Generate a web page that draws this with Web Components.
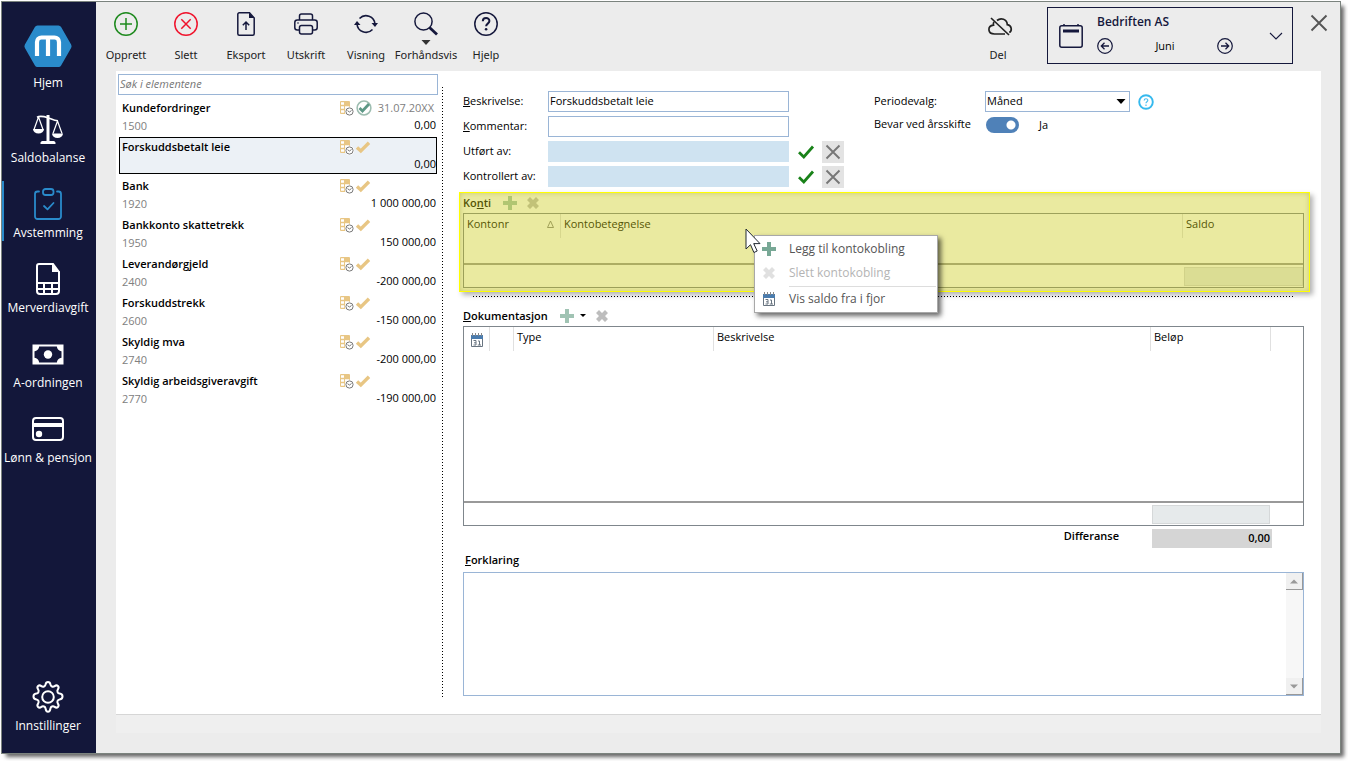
<!DOCTYPE html>
<html lang="nb">
<head>
<meta charset="utf-8">
<title>Avstemming – Forskuddsbetalt leie</title>
<style>
  body { margin: 0; background: #fff; color: #000; font: 11px/18px "Open Sans", "Noto Sans", sans-serif; }
</style>
</head>
<body>
<app-window>
  <nav-rail slot="nav">
    <nav-item icon="home">Hjem</nav-item>
    <nav-item icon="scales">Saldobalanse</nav-item>
    <nav-item icon="clipboard" current>Avstemming</nav-item>
    <nav-item icon="sheet">Merverdiavgift</nav-item>
    <nav-item icon="cash">A-ordningen</nav-item>
    <nav-item icon="card">Lønn &amp; pensjon</nav-item>
    <nav-item icon="gear" slot="end">Innstillinger</nav-item>
  </nav-rail>

  <tool-bar slot="header">
    <tool-button icon="add">Opprett</tool-button>
    <tool-button icon="remove">Slett</tool-button>
    <tool-button icon="export">Eksport</tool-button>
    <tool-button icon="print">Utskrift</tool-button>
    <tool-button icon="refresh">Visning</tool-button>
    <tool-button icon="search" menu>Forhåndsvis</tool-button>
    <tool-button icon="help">Hjelp</tool-button>
    <tool-button icon="cloud" slot="end">Del</tool-button>
    <period-picker slot="end" company="Bedriften AS" period="Juni"></period-picker>
  </tool-bar>

  <account-list>
    <account-item number="1500" amount="0,00" date="31.07.20XX" done>Kundefordringer</account-item>
    <account-item amount="0,00" selected>Forskuddsbetalt leie</account-item>
    <account-item number="1920" amount="1 000 000,00">Bank</account-item>
    <account-item number="1950" amount="150 000,00">Bankkonto skattetrekk</account-item>
    <account-item number="2400" amount="-200 000,00">Leverandørgjeld</account-item>
    <account-item number="2600" amount="-150 000,00">Forskuddstrekk</account-item>
    <account-item number="2740" amount="-200 000,00">Skyldig mva</account-item>
    <account-item number="2770" amount="-190 000,00">Skyldig arbeidsgiveravgift</account-item>
  </account-list>

  <detail-pane>
    <text-field slot="form" value="Forskuddsbetalt leie"><u>B</u>eskrivelse:</text-field>
    <text-field slot="form"><u>K</u>ommentar:</text-field>
    <text-field slot="form" signoff>Utført av:</text-field>
    <text-field slot="form" signoff>Kontrollert av:</text-field>
    <period-options slot="options"></period-options>

    <highlight-box>
      <section-title><span slot="text">Ko<u>n</u>ti</span></section-title>
      <data-grid kind="accounts"></data-grid>
      <context-menu slot="over"></context-menu>
    </highlight-box>
    <dotted-rule></dotted-rule>
    <section-title menu><span slot="text"><u>D</u>okumentasjon</span></section-title>
    <data-grid kind="documents"></data-grid>
    <difference-row value="0,00">Differanse</difference-row>
    <note-field><u>F</u>orklaring</note-field>
  </detail-pane>
</app-window>

<script>
const ICONS = {
  home: [48, 45, '<path d="M13.500 0.500h21a3 3 0 0 1 2.600 1.500l10 17.500a3.500 3.500 0 0 1 0 3.500l-10 17.500a3 3 0 0 1-2.600 1.500h-21a3 3 0 0 1-2.600-1.500l-10-17.500a3.500 3.500 0 0 1 0-3.500l10-17.500a3 3 0 0 1 2.600-1.500z" fill="#2a8bcb"/><path d="M13 31V17a4.500 4.500 0 0 1 4.500-4.500h13A4.500 4.500 0 0 1 35 17v14M24 12.500V31" fill="none" stroke="#fff" stroke-width="4.200"/>'],
  scales: [32, 32, '<g fill="none" stroke="#fff"><path d="M16 2v26" stroke-width="3"/><path d="M5 4.200c3-1.600 8-.4 11 .6s6 3 10 3" stroke-width="1.600"/><path d="M6.500 4L2 16.500M6.500 4L11 16.500M25.500 8L21 20.500M25.500 8L30 20.500" stroke-width="1.200"/></g><path d="M1 16h11a5.500 4.500 0 0 1-11 0zM20 20.500h11a5.500 4.500 0 0 1-11 0zM8.500 29.500a2 2 0 0 1 2-1.500h11a2 2 0 0 1 2 1.500v1.500h-15z" fill="#fff"/>'],
  clipboard: [32, 32, '<g fill="none" stroke="#2a8bcb" stroke-width="1.800" stroke-linecap="round" stroke-linejoin="round"><path d="M7 3.500H5.500A2.500 2.500 0 0 0 3 6v22.500A2.500 2.500 0 0 0 5.500 31h21a2.500 2.500 0 0 0 2.500-2.500V6a2.500 2.500 0 0 0-2.500-2.500H25"/><rect x="11" y="1" width="10.500" height="6" rx="2.500"/><path d="M12 18l3.500 3.300L21.500 15"/></g>'],
  sheet: [32, 32, '<path d="M7 1h14l6 8v19a3 3 0 0 1-3 3H8a3 3 0 0 1-3-3V3a2 2 0 0 1 2-2z" fill="none" stroke="#fff" stroke-width="2"/><path d="M20 1v8h8zM5 19h22v2H5zM5 25h22v2H5zM11 19h2v12h-2zM19 19h2v12h-2z" fill="#fff"/>'],
  cash: [32, 32, '<path d="M1.500 7.500h29v18h-29z" fill="none" stroke="#fff" stroke-width="2"/><circle cx="16" cy="16.500" r="4.200" fill="#fff"/><path d="M1 7h6a5 5 0 0 1-6 6zM31 7h-6a5 5 0 0 0 6 6zM1 26h6a5 5 0 0 0-6-6zM31 26h-6a5 5 0 0 1 6-6z" fill="#fff"/>'],
  card: [32, 32, '<rect x="1" y="5" width="30" height="22" rx="3" fill="none" stroke="#fff" stroke-width="2"/><path d="M1 10h30v4H1z" fill="#fff"/><circle cx="7" cy="21" r="3.200" fill="#fff"/>'],
  gear: [32, 32, '<g fill="none" stroke="#fff" stroke-width="2" stroke-linejoin="round"><path d="M13.600 3.400c.5-3.200 4.300-3.200 4.800 0 .3 2 2.500 2.900 4.200 1.700 2.600-1.900 5.200.7 3.300 3.300-1.200 1.700-.3 3.900 1.700 4.200 3.900.5 3.900 5.300 0 5.800-2 .3-2.900 2.500-1.700 4.200 1.900 2.600-.7 5.200-3.300 3.300-1.700-1.200-3.900-.3-4.200 1.700-.5 4.200-4.300 4.200-4.800 0-.3-2-2.500-2.900-4.200-1.700-2.600 1.900-5.200-.7-3.300-3.300 1.200-1.700.3-3.900-1.700-4.200-3.900-.5-3.900-5.300 0-5.800 2-.3 2.900-2.500 1.700-4.200-1.900-2.600.7-5.200 3.300-3.300 1.700 1.200 3.900.3 4.200-1.700z"/><circle cx="16" cy="16" r="5.800"/></g>'],
  add: [24, 24, '<g fill="none" stroke="#1e8a1e" stroke-width="1.500"><circle cx="12" cy="12" r="11.200"/><path d="M12 6v12M6 12h12"/></g>'],
  remove: [24, 24, '<g fill="none" stroke="#f0142d" stroke-width="1.500"><circle cx="12" cy="12" r="11.200"/><path d="M7.300 7.300l9.400 9.400M16.700 7.300l-9.400 9.400"/></g>'],
  export: [24, 24, '<g fill="none" stroke="#15183c" stroke-width="1.500"><path d="M5.500.8h10L20.200 6v15.700a1.500 1.500 0 0 1-1.500 1.500H5.300a1.500 1.500 0 0 1-1.500-1.500V2.300A1.500 1.500 0 0 1 5.300.8z"/><path d="M12 18v-7.500M8.800 13.300L12 10l3.200 3.300"/></g><path d="M15 .8V6h5.500z" fill="#15183c"/>'],
  print: [24, 24, '<g fill="none" stroke="#15183c" stroke-width="1.500"><path d="M5.500 8V4a2 2 0 0 1 2-2h9a2 2 0 0 1 2 2v4"/><path d="M5.500 18H3.300a2.500 2.500 0 0 1-2.500-2.500v-5A2.500 2.500 0 0 1 3.300 8h17.400a2.500 2.500 0 0 1 2.500 2.500v5a2.500 2.500 0 0 1-2.500 2.500h-2.200"/><path d="M5.500 15.500a2 2 0 0 1 2-2h9a2 2 0 0 1 2 2V20a2 2 0 0 1-2 2h-9a2 2 0 0 1-2-2z"/></g><circle cx="4" cy="11" r=".8" fill="#15183c"/>'],
  refresh: [24, 24, '<g fill="none" stroke="#15183c" stroke-width="1.600"><path d="M5.500 6.500A9 9 0 0 1 21 12M18.500 17.500A9 9 0 0 1 3 12"/></g><path d="M17.500 11h6.500L21 15zM0 13h6.500L3 9z" fill="#15183c"/>'],
  search: [24, 24, '<circle cx="9.500" cy="9.500" r="8.600" fill="none" stroke="#15183c" stroke-width="1.500"/><path d="M15.500 15.500l7.500 7" stroke="#15183c" stroke-width="2.800"/>'],
  help: [24, 24, '<g fill="none" stroke="#15183c"><circle cx="12" cy="12" r="11.200" stroke-width="1.500"/><path d="M8.800 9.300c0-4.200 6.600-4.200 6.600-.3 0 2.600-3.300 2.600-3.300 5.200" stroke-width="2"/></g><circle cx="12.100" cy="17.200" r="1.300" fill="#15183c"/>'],
  cloud: [24, 24, '<g fill="none" stroke="#222" stroke-width="1.700"><path d="M11 8.500c4-3.500 10-1.200 10.300 4.200 4.800.8 4.900 6.200 2 7.800M19 22H8.500C1.500 22 1 14 7.500 13.200c-.3-1.500-.1-2.500.4-3.300"/><path d="M5 6l18 17"/></g>'],
  calendar: [24, 24, '<g fill="none" stroke="#15183c"><rect x=".8" y="1.800" width="22.400" height="21.400" rx="2" stroke-width="1.500"/><path d="M4 7h16" stroke-width="3"/><path d="M5 0v2M19 0v2" stroke-width="1.500"/></g>'],
  left: [16, 16, '<g fill="none" stroke="#15183c" stroke-width="1.200"><circle cx="8" cy="8" r="7.300"/><path d="M12 8H4.500M7.500 4.800L4.300 8l3.200 3.200" stroke-width="1.300"/></g>'],
  right: [16, 16, '<g fill="none" stroke="#15183c" stroke-width="1.200"><circle cx="8" cy="8" r="7.300"/><path d="M4 8h7.500M8.500 4.800L11.700 8l-3.200 3.200" stroke-width="1.300"/></g>'],
  chevron: [14, 8, '<path d="M1 1l6 6 6-6" fill="none" stroke="#15183c" stroke-width="1.100"/>'],
  close: [16, 16, '<path d="M.5.500l15 15M15.500.500l-15 15" stroke="#555" stroke-width="1.900"/>'],
  cross: [16, 16, '<path d="M1.500 1.500l13 13M14.500 1.500l-13 13" stroke="#777" stroke-width="1.900"/>'],
  caret: [10, 5, '<path d="M.5 0h9L5 5z" fill="currentColor"/>'],
  tick: [16, 14, '<path d="M1 7.300L5.800 12 15 1.500" fill="none" stroke="#198219" stroke-width="2.800"/>'],
  gold: [14, 12, '<path d="M1 6.500L4.800 10 13 1.800" fill="none" stroke="#e8c684" stroke-width="3.400"/>'],
  approved: [16, 16, '<circle cx="8" cy="8" r="6.900" fill="none" stroke="#9dbdb0" stroke-width="1.500"/><path d="M3.500 8l3 3L13 4" fill="none" stroke="#5d9886" stroke-width="2.800"/>'],
  ledger: [14, 15, '<path d="M1 0h8a1 1 0 0 1 1 1v12H1a1 1 0 0 1-1-1V1a1 1 0 0 1 1-1z" fill="#e8c684"/><path d="M1 1.200h3v2.600H1zM1 5.200h3v2.600H1zM1 9.200h3v2.600H1zM5 5.200h4v2.600H5z" fill="#fff"/><circle cx="9.500" cy="10.500" r="4.800" fill="#fff"/><circle cx="9.500" cy="10.500" r="3.600" fill="#fff" stroke="#777"/><path d="M7.500 9.700l2 1.300L11.500 9.500" fill="none" stroke="#777"/>'],
  plus: [14, 14, '<path d="M5 0h4v5h5v4H9v5H5V9H0V5h5z" fill="currentColor"/>'],
  erase: [12, 12, '<path d="M3 0L6 3 9 0 12 3 9 6 12 9 9 12 6 9 3 12 0 9 3 6 0 3z" fill="currentColor"/>'],
  sort: [7, 8, '<path d="M3.500 1L6.500 7.500H.5z" fill="none" stroke="#777" stroke-width=".9"/>'],
  date: [12, 14, '<path d="M0 2h12v4H0z" fill="#4a7cae"/><path d="M1.500 0v3M4.500 0v3M7.500 0v3M10.500 0v3" stroke="#888"/><path d="M.5 6v7.500h11V6M2.500 7.500h2.500v4.500H2.500M3 9.800h2M7 8h1.500v4M6.800 12H10" fill="none" stroke="#687480"/>'],
  info: [16, 16, '<circle cx="8" cy="8" r="6.800" fill="none" stroke="#35b9ee" stroke-width="1.900"/><path d="M6.200 6.500c0-2.300 3.600-2.300 3.600-.2 0 1.400-1.800 1.500-1.800 3M8 10.600v1.400" fill="none" stroke="#4abff0" stroke-width="1.200"/>'],
  pointer: [16, 26, '<path d="M1 1v20l4.500-4.300 3.400 7.800 3.300-1.500-3.500-7.400H15z" fill="#fff" stroke="#222a33"/>'],
  up: [8, 5, '<path d="M0 4.500L4 .500l4 4z" fill="#999"/>'],
  down: [8, 5, '<path d="M0 .500l4 4 4-4z" fill="#999"/>']
};

/* Registers an element whose open shadow root is filled from a template. */
function element(tag, markup, setup) {
  const template = document.createElement('template');
  template.innerHTML = markup;
  customElements.define(tag, class extends HTMLElement {
    connectedCallback() {
      if (this.shadowRoot) return;
      const root = this.attachShadow({ mode: 'open' });
      root.append(template.content.cloneNode(true));
      if (setup) setup(this, root);
    }
  });
}

function icon(name) {
  const el = document.createElement('ui-icon');
  el.setAttribute('name', name);
  return el;
}

element('ui-icon', `<style>:host{display:block;flex:none}svg{display:block;overflow:visible}</style>`, (host, root) => {
  const [w, h, body] = ICONS[host.getAttribute('name')];
  root.innerHTML += `<svg width="${w}" height="${h}" viewBox="0 0 ${w} ${h}" aria-hidden="true">${body}</svg>`;
});

element('app-window', `<style>
  :host{display:grid;grid-template-columns:94px 1fr;min-height:calc(100vh - 10px);margin:2px 8px 8px 2px;background:#ececec;
    box-shadow:0 0 0 1px #7b837e,4px 4px 4px rgba(0,0,0,.6)}
  .main{display:flex;flex-direction:column;min-width:0}
  main{display:grid;grid-template-columns:327px 1fr;flex:1;margin:0 19px 0 20px;background:#fff}
  footer{height:18px;margin:0 19px 20px 20px;border-top:1px solid #d6d6d6;background:#efefef}
</style>
<slot name="nav"></slot>
<div class="main"><slot name="header"></slot><main><slot></slot></main><footer></footer></div>`);

element('nav-rail', `<style>
  :host{display:flex;background:#13173a}
  nav{display:flex;flex-direction:column;gap:15px;flex:1;padding:29px 0 19px}
  .end{margin-top:auto}
</style><nav><slot></slot><div class="end"><slot name="end"></slot></div></nav>`);

element('nav-item', `<style>
  :host{display:block}
  button{display:flex;flex-direction:column;align-items:center;justify-content:flex-end;gap:4px;box-sizing:border-box;width:100%;height:60px;
    padding:0 4px 0 0;border:0;border-left:2px solid transparent;background:none;color:#fff;font:12px/17px "Open Sans","Noto Sans",sans-serif;white-space:nowrap}
  :host([current]) button{border-left-color:#2a8bcb}
</style><button type="button"><span><slot></slot></span></button>`, (host, root) => {
  const button = root.querySelector('button');
  button.prepend(icon(host.getAttribute('icon')));
  if (host.hasAttribute('current')) button.setAttribute('aria-current', 'page');
});

element('tool-bar', `<style>
  :host{display:flex;height:69px}
  .end{display:flex;margin-left:auto}
  .close{align-self:flex-start;margin:13px 13px 0 18px;padding:0;border:0;background:none}
</style><slot></slot><div class="end"><slot name="end"></slot><button class="close" type="button" aria-label="Lukk"><ui-icon name="close"></ui-icon></button></div>`);

element('tool-button', `<style>
  :host{display:block;width:60px}
  :host([slot=end]){margin-right:19px}
  button{position:relative;display:flex;flex-direction:column;align-items:center;gap:10px;width:100%;padding:10px 0 0;border:0;background:none;
    color:#222;font:11px/18px "Noto Sans","Open Sans",sans-serif;white-space:nowrap}
  .menu{position:absolute;top:38px;left:25px;color:#333}
  :host(:not([menu])) .menu{display:none}
</style><button type="button"><ui-icon class="menu" name="caret"></ui-icon><span><slot></slot></span></button>`, (host, root) => {
  root.querySelector('button').prepend(icon(host.getAttribute('icon')));
});

element('period-picker', `<style>
  :host{display:grid;grid-template-columns:24px 136px 1fr;column-gap:14px;align-items:center;justify-items:end;box-sizing:border-box;width:246px;height:57px;margin-top:5px;padding:0 9px 0 11px;
    border:1px solid #15183c}
  strong{display:block;font:600 12px/18px "Open Sans","Noto Sans",sans-serif;color:#15183c}
  .step{display:flex;align-items:center;justify-content:space-between;margin-top:6px;line-height:18px}
  .body{width:100%;padding-bottom:4px}
  button{padding:0;border:0;background:none}
</style>
<ui-icon name="calendar"></ui-icon>
<div class="body"><strong></strong><div class="step"><button type="button" aria-label="Forrige"><ui-icon name="left"></ui-icon></button><span></span><button type="button" aria-label="Neste"><ui-icon name="right"></ui-icon></button></div></div>
<button type="button" aria-label="Velg"><ui-icon name="chevron"></ui-icon></button>`, (host, root) => {
  root.querySelector('strong').textContent = host.getAttribute('company');
  root.querySelector('span').textContent = host.getAttribute('period');
});

element('account-list', `<style>
  :host{display:flex;flex-direction:column;margin:3px 0 17px}
  input{box-sizing:border-box;height:21px;margin:0 5px 0 2px;padding:0 1px 2px;border:1px solid #9ab5d6;font:italic 11px/18px "Open Sans","Noto Sans",sans-serif;outline:0}
  input::placeholder{color:#777;opacity:1}
  .items{flex:1;margin-top:-8px;padding-top:11px;
    background:repeating-linear-gradient(#000 0 1px,#fff 1px 3px) right top/1px 100% no-repeat}
</style><input type="search" placeholder="Søk i elementene" aria-label="Søk i elementene"><div class="items"><slot></slot></div>`);

element('account-item', `<style>
  :host{display:grid;grid-template-columns:1fr 16px 16px 64px;grid-template-rows:18px 18px;box-sizing:border-box;height:37px;margin:0 6px 2px 3px;padding:1px 1px 0 3px}
  :host([selected]){background:#ecf1f6;outline:1px solid #000;outline-offset:-1px}
  b{font-weight:600;white-space:nowrap}
  .no,.date{color:#808080}
  .date,.amount{text-align:right;white-space:nowrap}
  .amount{grid-column:2/5;line-height:16px}
  ui-icon{align-self:center}
  .date{margin-right:2px}
</style><b><slot></slot></b><ui-icon name="ledger"></ui-icon><span class="date"></span><span class="no"></span><span class="amount"></span>`, (host, root) => {
  root.querySelector('.date').before(icon(host.hasAttribute('done') ? 'approved' : 'gold'));
  for (const [cls, attr] of [['.date', 'date'], ['.no', 'number'], ['.amount', 'amount']])
    root.querySelector(cls).textContent = host.getAttribute(attr) || '';
});

element('detail-pane', `<style>
  :host{display:flex;flex-direction:column;min-width:0;padding:20px 17px 0 20px}
  .top{display:grid;grid-template-columns:381px 1fr;column-gap:30px;margin-bottom:5px}
  .form{display:grid;gap:4px}
</style><div class="top"><div class="form"><slot name="form"></slot></div><slot name="options"></slot></div><slot></slot>`);

element('text-field', `<style>
  :host{display:grid;grid-template-columns:85px 241px 1fr;align-items:center;height:21px}
  label{line-height:16px;padding-bottom:2px}
  input{box-sizing:border-box;width:100%;height:21px;margin:0;padding:0 1px 2px;border:1px solid #9ab5d6;background:#fff;font:11px/18px "Open Sans","Noto Sans",sans-serif;outline:0}
  :host([signoff]) input{border-color:#cfe3f1;background:#cfe3f1}
  .actions{display:flex;align-items:center;justify-content:space-between;height:21px;margin-left:9px}
  :host(:not([signoff])) .actions{display:none}
  button{display:grid;place-items:center;padding:0;border:0;background:none}
  .clear{width:22px;height:22px;background:#e3e3e3}
</style><label for="field"><slot></slot></label><input id="field" type="text">
<div class="actions"><button type="button" aria-label="Godkjenn"><ui-icon name="tick"></ui-icon></button><button class="clear" type="button" aria-label="Fjern"><ui-icon name="cross"></ui-icon></button></div>`, (host, root) => {
  root.querySelector('input').value = host.getAttribute('value') || '';
});

element('period-options', `<style>
  :host{display:grid;grid-template-columns:111px 1fr;grid-template-rows:21px 21px;row-gap:2px;align-items:center;align-content:start}
  label{line-height:16px;padding-bottom:2px}
  .row{display:flex;align-items:center;gap:8px}
  .select{position:relative}
  select{appearance:none;display:block;width:145px;height:21px;padding:0 1px 2px;border:1px solid #9ab5d6;border-radius:0;background:#fff;color:#000;font:11px/18px "Open Sans","Noto Sans",sans-serif}
  .select ui-icon{position:absolute;right:4px;top:8px;pointer-events:none}
  input{appearance:none;width:33px;height:16px;margin:0 12px 0 1px;border-radius:8px;background:radial-gradient(circle at 25px 8px,#fff 4px,transparent 5px),#4f81b8}
  button{padding:0;border:0;background:none}
</style>
<label for="period">Periodevalg:</label>
<div class="row"><span class="select"><select id="period"><option>Måned</option></select><ui-icon name="caret"></ui-icon></span><button type="button" aria-label="Hjelp"><ui-icon name="info"></ui-icon></button></div>
<label for="keep">Bevar ved årsskifte</label>
<div class="row"><input id="keep" type="checkbox" role="switch" checked><span>Ja</span></div>`);

element('highlight-box', `<style>
  :host{display:block;position:relative;margin:0 -6px 0 -4px;padding:0 6px 4px 4px}
  .tint{position:absolute;inset:0;border:1px solid #ffff00;background:rgba(202,202,17,.4);pointer-events:none;
    box-shadow:inset 0 0 5px rgba(150,150,40,.4),3px 3px 5px rgba(0,0,0,.3)}
</style><slot></slot><div class="tint"></div><slot name="over"></slot>`);

element('section-title', `<style>
  :host{display:flex;align-items:center;height:21px}
  b{margin-right:12px;font-weight:600}
  button{padding:0;border:0;background:none;margin-right:10px}
  .add{color:#a0c3b3}
  .del{color:#bdbdbd}
  .more{display:none;margin:0 10px 0 -4px}
  :host([menu]) .more{display:block}
  svg{display:block}
</style><b><slot name="text"></slot></b>
<button class="add" type="button" aria-label="Legg til"><ui-icon name="plus"></ui-icon></button>
<button class="more" type="button" aria-label="Flere valg"><svg width="6" height="3" viewBox="0 0 6 3"><path d="M0 0h6L3 3z"/></svg></button>
<button class="del" type="button" aria-label="Slett"><ui-icon name="erase"></ui-icon></button>`);

const GRIDS = {
  accounts: { body: 25, total: 2, columns: [[96, 'Kontonr', 'sort'], [0, 'Kontobetegnelse'], [121, 'Saldo']] },
  documents: { body: 150, total: 4, columns: [[25, '', 'date'], [24, ''], [200, 'Type'], [0, 'Beskrivelse'], [120, 'Beløp'], [33, '']] }
};

element('data-grid', `<style>
  :host{display:block;border:1px solid #7f868c}
  table{width:100%;border-collapse:collapse;table-layout:fixed}
  th,td{padding:0;font-weight:normal;text-align:left}
  th{height:24px;vertical-align:top}
  th div{display:flex;align-items:center;justify-content:space-between;box-sizing:border-box;height:24px;padding:0 6px 4px 3px;border-left:1px solid #e0e0e0}
  th:first-child div{border-left:0}
  th.icon div{padding:1px 6px 0 7px}
  tfoot td{height:22px;border-top:2px solid #999}
  output{display:block;box-sizing:border-box;height:19px;margin:0 0 0 2px;border:1px solid #d5d8d9;background:#e6eaeb}
</style><table><colgroup></colgroup><thead><tr></tr></thead><tbody><tr></tr></tbody><tfoot><tr></tr></tfoot></table>`, (host, root) => {
  const grid = GRIDS[host.getAttribute('kind')];
  const [head, body, foot] = root.querySelectorAll('tr');
  grid.columns.forEach(([width, label, glyph], i) => {
    const col = document.createElement('col');
    if (width) col.style.width = width + 'px';
    root.querySelector('colgroup').append(col);
    const th = document.createElement('th');
    if (glyph && !label) th.className = 'icon';
    th.innerHTML = `<div><span>${label}</span></div>`;
    if (!label) th.querySelector('span').remove();
    if (glyph) th.firstChild.append(icon(glyph));
    head.append(th);
    body.insertCell().style.height = grid.body + 'px';
    const cell = foot.insertCell();
    if (i === grid.total) cell.append(document.createElement('output'));
  });
});

element('context-menu', `<style>
  :host{position:absolute;left:295px;top:43px;z-index:2;box-sizing:border-box;width:184px;padding:1px 0;border:1px solid #a8a8a8;background:#fff;
    box-shadow:3px 3px 5px rgba(0,0,0,.6)}
  button{display:grid;grid-template-columns:18px 1fr;column-gap:11px;align-items:center;justify-items:center;width:100%;height:24px;padding:0 0 0 5px;border:0;background:none;color:#555;
    font:12px/18px "Open Sans","Noto Sans",sans-serif;text-align:left}
  button:disabled{color:#b4b4b4}
  span{justify-self:start}
  .plus{color:#78a896}
  .erase{color:#e0e0e0}
  hr{margin:1px 1px 0 34px;border:0;border-top:1px solid #ddd}
  .pointer{position:absolute;left:-10px;top:-8px}
</style>
<button type="button"><ui-icon class="plus" name="plus"></ui-icon><span>Legg til kontokobling</span></button>
<button type="button" disabled><ui-icon class="erase" name="erase"></ui-icon><span>Slett kontokobling</span></button>
<hr>
<button type="button"><ui-icon name="date"></ui-icon><span>Vis saldo fra i fjor</span></button>
<ui-icon class="pointer" name="pointer"></ui-icon>`);

element('dotted-rule', `<style>
  :host{display:block;height:1px;margin:4px 10px 8px;background:repeating-linear-gradient(90deg,#000 0 1px,#fff 1px 3px)}
</style>`);

element('difference-row', `<style>
  :host{display:grid;grid-template-columns:1fr 120px;column-gap:33px;margin:3px 32px 0 0;font-weight:600}
  label{text-align:right;line-height:14px}
  output{height:19px;padding-right:2px;background:#d5d5d5;text-align:right;line-height:18px;box-sizing:border-box}
</style><label for="sum"><slot></slot></label><output id="sum"></output>`, (host, root) => {
  root.querySelector('output').textContent = host.getAttribute('value');
});

element('note-field', `<style>
  :host{display:block;margin:2px 0 18px}
  label{display:block;margin-left:2px;padding-bottom:2px;font-weight:600;line-height:20px}
  .box{display:flex;height:122px;border:1px solid #9ab5d6}
  textarea{flex:1;min-width:0;margin:0;padding:2px;border:0;resize:none;outline:0;overflow:hidden;font:11px/18px "Open Sans","Noto Sans",sans-serif}
  .bar{display:flex;flex-direction:column;justify-content:space-between;width:17px;background:#f7f7f7}
  button{display:grid;place-items:center;box-sizing:border-box;width:17px;height:17px;padding:0;border:0;border-right:1px solid #999;border-bottom:1px solid #999;background:#f0f0f0}
</style><label for="note"><slot></slot></label>
<div class="box"><textarea id="note"></textarea><div class="bar"><button type="button" aria-label="Rull opp"><ui-icon name="up"></ui-icon></button><button type="button" aria-label="Rull ned"><ui-icon name="down"></ui-icon></button></div></div>`);
</script>
</body>
</html>
